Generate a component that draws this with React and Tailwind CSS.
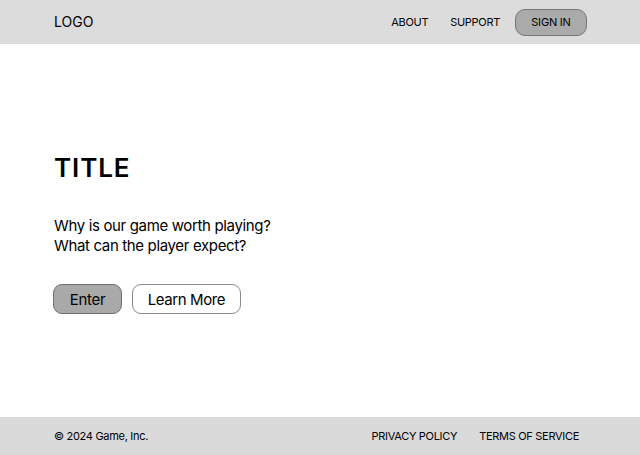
export default function App() {
  return (
    <div className="flex h-[455px] w-[640px] flex-col bg-white text-black" style={{ fontFamily: 'Inter, "Noto Sans", sans-serif' }}>
      <header className="flex h-[44px] items-center justify-between bg-[#dcdcdc] pl-[54px] pr-[53px]">
        <div className="text-[14px] leading-none">LOGO</div>
        <nav className="flex items-center">
          <a className="text-[11px] leading-none tracking-[-0.3px]">ABOUT</a>
          <a className="ml-[22px] text-[11px] leading-none tracking-[-0.3px]">SUPPORT</a>
          <button className="ml-[15px] flex h-[27px] w-[72px] items-center justify-center rounded-[10px] border border-[#777] bg-[#aaaaaa] text-[11px] leading-none tracking-[-0.2px]">
            SIGN IN
          </button>
        </nav>
      </header>
      <main className="flex flex-1 flex-col justify-center pl-[53px] pt-[5px]">
        <h1 className="pl-[1px] text-[26px] font-semibold leading-[32px] tracking-[0.9px]">TITLE</h1>
        <p className="mt-[32px] pl-[1px] text-[15px] leading-[20px] tracking-[-0.35px]">
          Why is our game worth playing?
          <br />
          What can the player expect?
        </p>
        <div className="mt-[28px] flex gap-[10px]">
          <button className="flex h-[30px] w-[69px] items-center justify-center rounded-[9px] border border-[#6f6f6f] bg-[#a9a9a9] text-[15px] leading-none tracking-[-0.3px]">
            Enter
          </button>
          <button className="flex h-[30px] w-[109px] items-center justify-center rounded-[9px] border border-[#8a8a8a] bg-white text-[15px] leading-none tracking-[-0.4px]">
            Learn More
          </button>
        </div>
      </main>
      <footer className="flex h-[38px] items-center justify-between bg-[#dadada] pl-[54px] pr-[61px] text-[11px] leading-none tracking-[-0.3px]">
        <div>© 2024 Game, Inc.</div>
        <div className="flex gap-[22px]">
          <span>PRIVACY POLICY</span>
          <span>TERMS OF SERVICE</span>
        </div>
      </footer>
    </div>
  );
}
